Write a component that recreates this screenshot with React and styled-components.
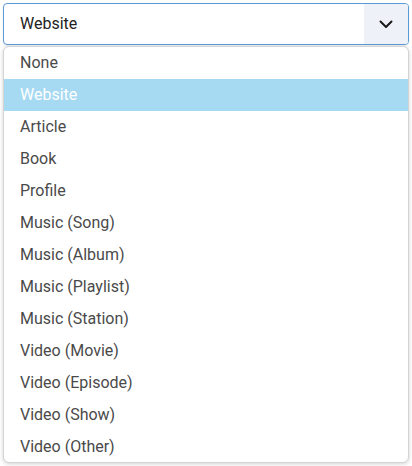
import React, { useState } from "react";
import styled, { createGlobalStyle } from "styled-components";

const GlobalStyle = createGlobalStyle`
  html, body {
    margin: 0;
    padding: 0;
    background: #ffffff;
    font-family: Roboto, "Liberation Sans", sans-serif;
  }
`;

const options = [
  "None",
  "Website",
  "Article",
  "Book",
  "Profile",
  "Music (Song)",
  "Music (Album)",
  "Music (Playlist)",
  "Music (Station)",
  "Video (Movie)",
  "Video (Episode)",
  "Video (Show)",
  "Video (Other)",
];

function Chevron() {
  return (
    <svg width="14" height="14" viewBox="0 0 14 14" fill="none">
      <path
        d="M1.5 4.5 L7 10 L12.5 4.5"
        stroke="#1a1a1a"
        strokeWidth="2"
        strokeLinecap="round"
        strokeLinejoin="round"
      />
    </svg>
  );
}

export default function App() {
  const [value, setValue] = useState("Website");

  return (
    <>
      <GlobalStyle />
      <Page>
        <Select>
          <Value>{value}</Value>
          <Toggle>
            <Chevron />
          </Toggle>
        </Select>
        <List>
          {options.map((opt) => (
            <Option
              key={opt}
              $selected={opt === value}
              onClick={() => setValue(opt)}
            >
              {opt}
            </Option>
          ))}
        </List>
      </Page>
    </>
  );
}

const Page = styled.div`
  display: flex;
  flex-direction: column;
  gap: 1px;
  padding: 3px;
  height: 466px;
  box-sizing: border-box;
`;

const Select = styled.div`
  display: flex;
  align-items: stretch;
  height: 42px;
  box-sizing: border-box;
  border: 1px solid #5b9bd5;
  border-radius: 4px;
  background: #ffffff;
  overflow: hidden;
  box-shadow: 0 1px 2px rgba(0, 0, 0, 0.08);
`;

const Value = styled.div`
  flex: 1;
  display: flex;
  align-items: center;
  padding-left: 16px;
  font-size: 16px;
  color: #222;
`;

const Toggle = styled.div`
  width: 44px;
  display: flex;
  align-items: center;
  justify-content: center;
  background: #eef1f7;
`;

const List = styled.div`
  display: flex;
  flex-direction: column;
  background: #ffffff;
  border: 1px solid #d4d4d4;
  border-radius: 6px;
  overflow: hidden;
  box-shadow: 0 1px 4px rgba(0, 0, 0, 0.18);
`;

const Option = styled.div`
  height: 32px;
  display: flex;
  align-items: center;
  padding-left: 16px;
  font-size: 16px;
  color: ${(p) => (p.$selected ? "#ffffff" : "#4a4a4a")};
  background: ${(p) => (p.$selected ? "#a6d9f2" : "transparent")};
  cursor: pointer;
`;
